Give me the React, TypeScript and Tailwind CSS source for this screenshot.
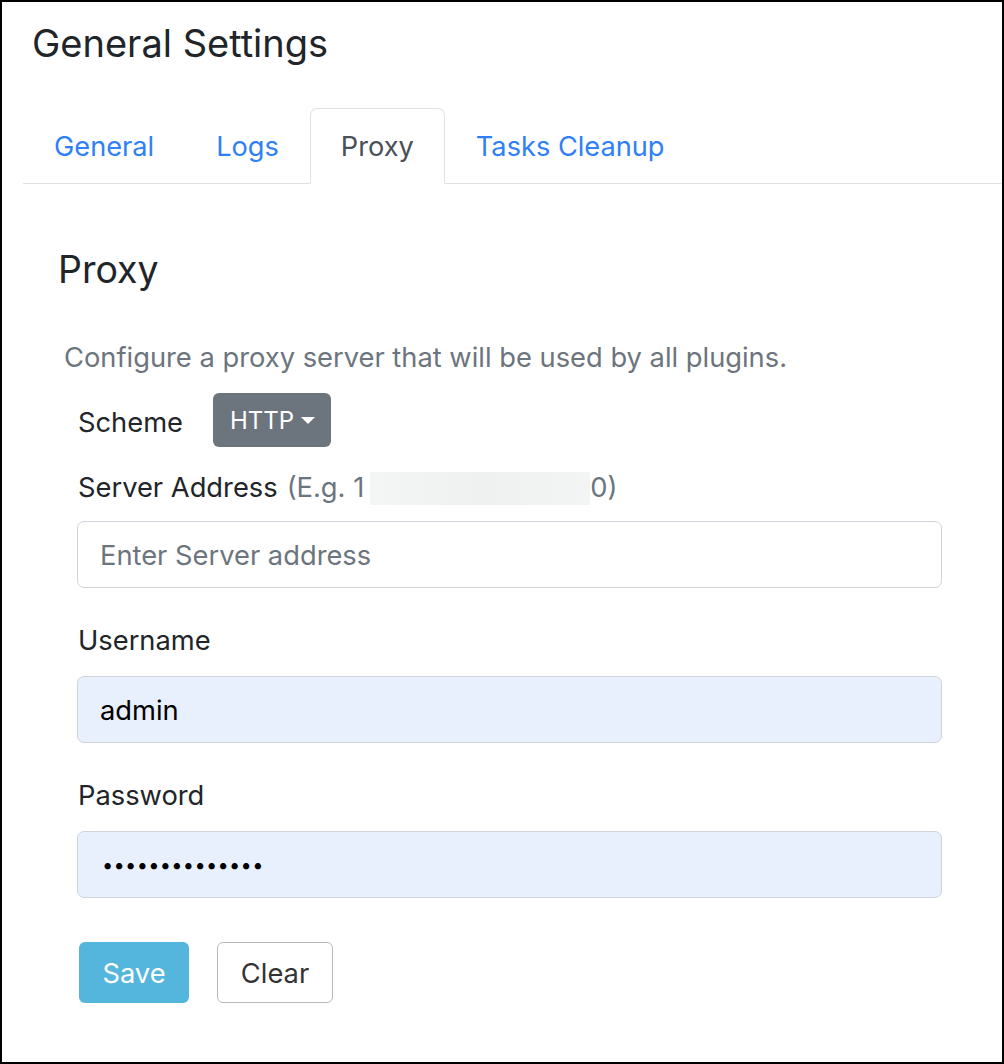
import React from "react";

const font = { fontFamily: "Inter, 'Noto Sans', 'Liberation Sans', sans-serif" };

function Tab({ label, active }: { label: string; active?: boolean }) {
  return (
    <div
      className={
        "px-[30px] pt-[17px] pb-[15px] text-[27.2px] leading-[42px] border rounded-t-[7px] -mb-px " +
        (active
          ? "border-[#dee2e6] border-b-white bg-white text-[#495057]"
          : "border-transparent text-[#2f80f6]")
      }
    >
      {label}
    </div>
  );
}

export default function App() {
  return (
    <div
      className="w-[1004px] h-[1064px] border-2 border-black bg-white overflow-hidden text-[#212529]"
      style={font}
    >
      <h1 className="pt-[18px] pl-[30px] text-[38px] leading-[47px] font-normal">General Settings</h1>

      <div className="mt-[41px] ml-[21px] flex border-b border-[#dee2e6]">
        <Tab label="General" />
        <Tab label="Logs" />
        <Tab label="Proxy" active />
        <Tab label="Tasks Cleanup" />
      </div>

      <div className="pl-[56px]">
        <h2 className="mt-[62px] text-[37.5px] leading-[47px] font-normal">Proxy</h2>
        <p className="mt-[44px] ml-[6px] text-[27.3px] leading-[42px] text-[#6c757d]">
          Configure a proxy server that will be used by all plugins.
        </p>
      </div>

      <div className="pl-[75px] w-[940px]">
        <div className="mt-[14px] flex items-center gap-[30px]">
          <span className="text-[27.3px] leading-[42px] mt-[5px] ml-[1px]">Scheme</span>
          <button className="h-[54px] pl-[17px] pr-[16px] pt-[1px] rounded-[6px] bg-[#6c757d] text-white text-[24px] flex items-center gap-[7px]">
            HTTP
            <span className="inline-block w-0 h-0 border-l-[7px] border-r-[7px] border-t-[7px] border-l-transparent border-r-transparent border-t-white" />
          </button>
        </div>

        <div className="mt-[20px] text-[27.3px] leading-[42px] flex items-center whitespace-nowrap pl-[1px]">
          <span>Server Address</span>
          <span className="text-[#6c757d] ml-[9px]">(E.g. 1</span>
          <span className="inline-block ml-[6px] w-[220px] h-[33px] bg-gradient-to-r from-[#f4f5f5] via-[#eff0f0] to-[#f3f4f4]" />
          <span className="text-[#6c757d]">0)</span>
        </div>
        <input
          className="mt-[12px] block w-[865px] h-[67px] px-[22px] pt-[2px] rounded-[7px] border border-[#ced4da] text-[27.3px] text-[#212529] placeholder:text-[#6c757d] outline-none bg-white"
          placeholder="Enter Server address"
          readOnly
        />

        <div className="mt-[32px] text-[27.3px] leading-[42px] pl-[1px]">Username</div>
        <input
          className="mt-[14px] block w-[865px] h-[67px] px-[22px] pt-[2px] rounded-[7px] border border-[#ced4da] text-[27.3px] text-black outline-none bg-[#e8f0fe]"
          defaultValue="admin"
          readOnly
        />

        <div className="mt-[32px] text-[27.3px] leading-[42px] pl-[1px]">Password</div>
        <input
          type="password"
          className="mt-[14px] block w-[865px] h-[67px] pl-[24px] pr-[22px] rounded-[7px] border border-[#ced4da] text-[20px] tracking-[0.3px] text-black outline-none bg-[#e8f0fe]"
          defaultValue="aaaaaaaaaaaaaa"
          readOnly
        />

        <div className="mt-[44px] flex gap-[28px] pl-[2px]">
          <button className="w-[110px] h-[61px] pt-[3px] rounded-[6px] bg-[#54b6dc] text-white text-[27.3px]">Save</button>
          <button className="w-[116px] h-[61px] pt-[3px] rounded-[6px] border border-[#b8b8b8] bg-white text-[#333] text-[27.3px]">Clear</button>
        </div>
      </div>
    </div>
  );
}
